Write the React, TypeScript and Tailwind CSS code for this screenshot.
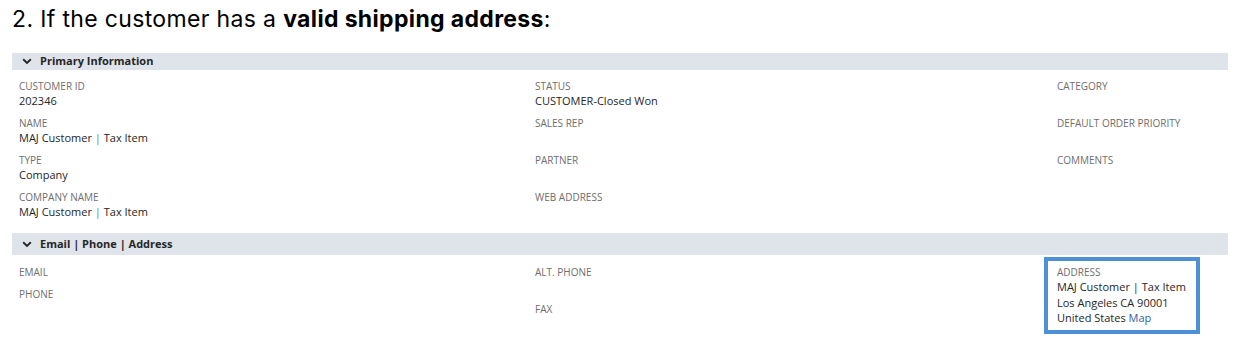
import React from 'react';

type FieldProps = {
  label: string;
  value?: React.ReactNode;
  reserve?: boolean;
};

const Field = ({ label, value, reserve = true }: FieldProps) => (
  <div className="mb-[7px]">
    <div className="pt-[1px] text-[10px] leading-[14px] uppercase text-[#6e6e6e]">{label}</div>
    {value ? (
      <div className="text-[11px] leading-[15px] text-[#262626]">{value}</div>
    ) : reserve ? (
      <div className="h-[15px]" />
    ) : null}
  </div>
);

const Pipe = () => <span className="text-[#4a86c8]">|</span>;

const SectionHeader = ({ title, height }: { title: string; height: string }) => (
  <div className={`flex items-center bg-[#dfe3ea] pl-[10px] ${height}`}>
    <svg width="10" height="7" viewBox="0 0 10 7" className="mr-[8px]">
      <path d="M1.2 1.3 L5 5 L8.8 1.3" fill="none" stroke="#262626" strokeWidth="1.9" />
    </svg>
    <span className="text-[11px] font-bold text-[#262626]">{title}</span>
  </div>
);

const App = () => {
  return (
    <div className="relative h-[340px] w-[1233px] overflow-hidden bg-white font-['Open_Sans',sans-serif]">
      {/* Title */}
      <div className="pl-[12px] pt-[5px] font-['Inter',sans-serif] text-[23px] leading-[28px] tracking-[0.35px] text-black">
        2. If the customer has a <span className="font-bold">valid shipping address</span>:
      </div>

      <div className="ml-[12px] mt-[20px] w-[1216px]">
        {/* Primary Information */}
        <SectionHeader title="Primary Information" height="h-[17px]" />
        <div className="grid grid-cols-[516px_522px_1fr] pl-[7px] pt-[8px]">
          <div className="flex flex-col">
            <Field label="Customer ID" value="202346" />
            <Field
              label="Name"
              value={
                <>
                  MAJ Customer <Pipe /> Tax Item
                </>
              }
            />
            <Field label="Type" value="Company" />
            <Field
              label="Company Name"
              value={
                <>
                  MAJ Customer <Pipe /> Tax Item
                </>
              }
            />
          </div>
          <div className="flex flex-col">
            <Field label="Status" value="CUSTOMER-Closed Won" />
            <Field label="Sales Rep" />
            <Field label="Partner" />
            <Field label="Web Address" />
          </div>
          <div className="flex flex-col">
            <Field label="Category" />
            <Field label="Default Order Priority" />
            <Field label="Comments" />
          </div>
        </div>

        {/* Email | Phone | Address */}
        <div className="mt-[7px]">
          <SectionHeader title="Email | Phone | Address" height="h-[22px]" />
        </div>
        <div className="grid grid-cols-[516px_522px_1fr] pl-[7px] pt-[8.5px]">
          <div className="flex flex-col">
            <Field label="Email" reserve={false} />
            <Field label="Phone" reserve={false} />
          </div>
          <div className="flex flex-col">
            <Field label="Alt. Phone" />
            <Field label="Fax" />
          </div>
          <div className="flex flex-col">
            <div className="pt-[1px] text-[10px] leading-[14.5px] uppercase text-[#6e6e6e]">Address</div>
            <div className="text-[11px] leading-[15.5px] text-[#262626]">MAJ Customer | Tax Item</div>
            <div className="text-[11px] leading-[15.5px] text-[#262626]">Los Angeles CA 90001</div>
            <div className="text-[11px] leading-[15.5px] text-[#262626]">
              United States <span className="text-[#2f62a8]">Map</span>
            </div>
          </div>
        </div>
      </div>

      {/* Highlight box around the address */}
      <div className="absolute left-[1044px] top-[257px] h-[77px] w-[156px] border-[4px] border-[#4e90d6]" />
    </div>
  );
};

export default App;
